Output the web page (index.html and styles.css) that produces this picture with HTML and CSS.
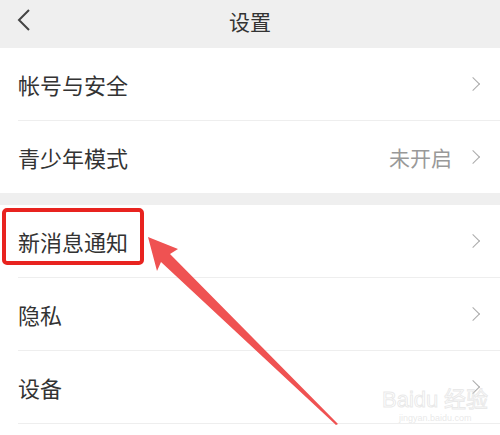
FILE: index.html
```html
<!DOCTYPE html>
<html lang="zh-CN">
<head>
  <meta charset="UTF-8" />
  <title>设置</title>
  <link rel="stylesheet" href="styles.css">
</head>
<body>
  <div class="page">
    <div class="topbar">
      <svg class="back" width="14" height="24" viewBox="0 0 14 24">
        <path d="M12 2 L2 12 L12 22" fill="none" stroke="#444" stroke-width="2" />
      </svg>
      <div class="title">设置</div>
    </div>

    <div class="group">
      <div class="row"><span class="label">帐号与安全</span><span class="arrow"></span></div>
      <div class="row row-last"><span class="label">青少年模式</span><span class="value">未开启</span><span class="arrow"></span></div>
    </div>

    <div class="group">
      <div class="row"><span class="label">新消息通知</span><span class="arrow"></span></div>
      <div class="row"><span class="label">隐私</span><span class="arrow"></span></div>
      <div class="row"><span class="label">设备</span><span class="arrow"></span></div>
    </div>

    <div class="highlight"></div>
    <svg class="pointer" width="500" height="435" viewBox="0 0 500 435">
      <polygon points="148,237 178,249 170,254 338,424 336,425 161,262 157,271" fill="#ef5252" />
    </svg>

    <div class="watermark">
      <div class="wm-logo">Bai<span>du</span> 经验</div>
      <div class="wm-url">jingyan.baidu.com</div>
    </div>
  </div>
</body>
</html>
```

FILE: styles.css
```css
body {
  margin: 0;
  background-color: #fff;
  font-family: "Noto Sans CJK SC", "Noto Sans", sans-serif;
  color: #333;
}

.page {
  position: relative;
  width: 500px;
  height: 435px;
  overflow: hidden;
}

.topbar {
  height: 48px;
  background-color: #efefef;
  display: flex;
  align-items: center;
  justify-content: center;
  position: relative;
}

.back {
  position: absolute;
  left: 17px;
  top: 8px;
}

.title {
  font-size: 21px;
  color: #333;
  line-height: 40px;
  margin-top: -6px;
}

.group {
  background-color: #fff;
}

.group + .group {
  border-top: 12px solid #efefef;
}

.row {
  height: 72px;
  margin-left: 18px;
  padding-right: 22px;
  border-bottom: 1px solid #eee;
  display: flex;
  align-items: center;
}

.row-last {
  border-bottom: none;
}

.label {
  flex: 1;
  font-size: 22px;
  color: #333;
}

.value {
  font-size: 21px;
  color: #999;
  margin-right: 16px;
}

.arrow {
  width: 9px;
  height: 9px;
  border-top: 1.5px solid #aaa;
  border-right: 1.5px solid #aaa;
  transform: rotate(45deg);
}

.highlight {
  position: absolute;
  left: 2px;
  top: 208px;
  width: 134px;
  height: 49px;
  border: 4px solid #e8231f;
  border-radius: 5px;
}

.pointer {
  position: absolute;
  left: 0;
  top: 0;
}

.watermark {
  position: absolute;
  left: 382px;
  top: 388px;
  color: rgba(210, 210, 210, 0.5);
  text-align: center;
  font-family: "Liberation Sans", sans-serif;
}

.wm-logo {
  font-size: 22px;
  line-height: 24px;
  color: transparent;
  -webkit-text-stroke: 1px rgba(215, 215, 215, 0.55);
}

.wm-url {
  font-size: 9px;
  line-height: 12px;
}
```
